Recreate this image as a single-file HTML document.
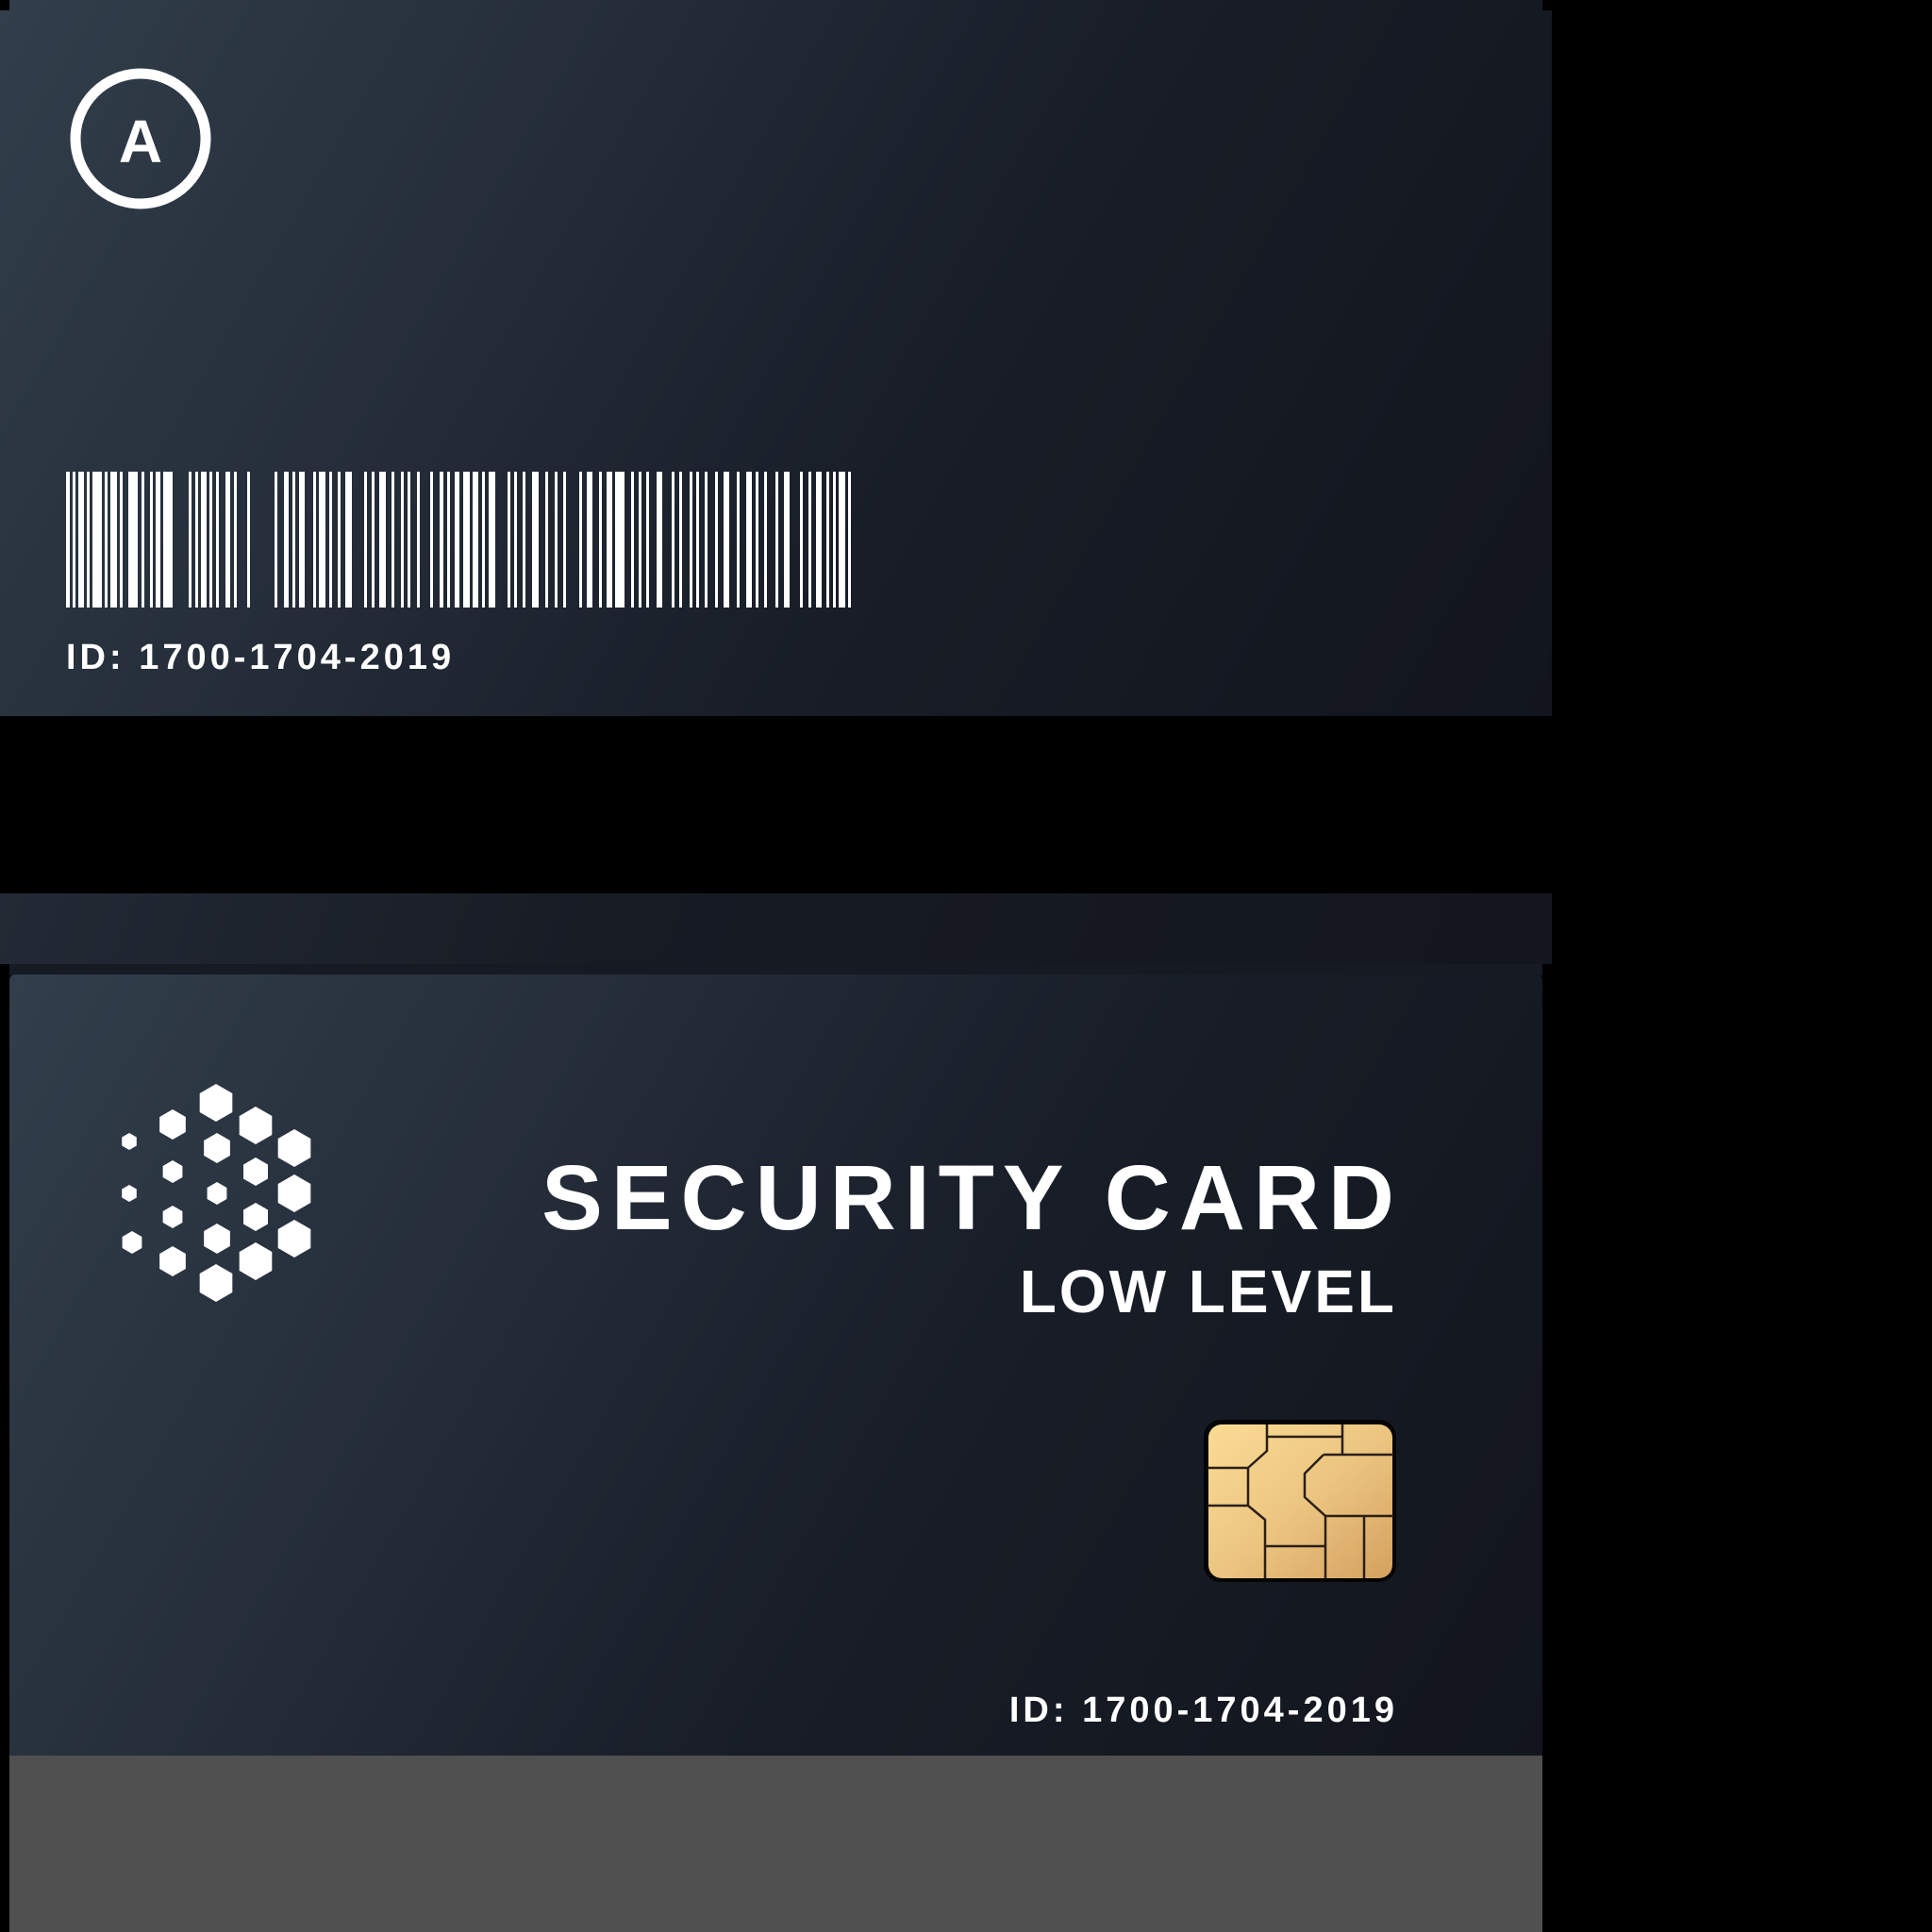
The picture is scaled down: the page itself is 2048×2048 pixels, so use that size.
<!DOCTYPE html>
<html><head><meta charset="utf-8"><style>
html,body{margin:0;padding:0;background:#000;width:2048px;height:2048px;overflow:hidden;position:relative;font-family:"Liberation Sans",Arial,sans-serif}
.abs{position:absolute}
.card{background:linear-gradient(120deg,#323e4b 0%,#252e3a 30%,#181d27 60%,#12151d 100%)}
.t{color:#fff;font-weight:bold;white-space:nowrap;position:absolute}
</style></head><body>
<div class="abs card" style="left:0;top:0;width:1645px;height:759px"></div>
<div class="abs" style="left:0;top:0;width:10px;height:11px;background:#000"></div>
<div class="abs" style="left:1635px;top:0;width:10px;height:11px;background:#000"></div>
<svg class="abs" style="left:0;top:0" width="300" height="300">
<circle cx="149" cy="147" r="69" fill="none" stroke="#fff" stroke-width="11"/>
<text x="149" y="172" text-anchor="middle" font-family="Liberation Sans,Arial,sans-serif" font-weight="bold" font-size="64" fill="#fff">A</text>
</svg>
<svg class="abs" style="left:70px;top:500px" width="832" height="144" fill="#fff">
<rect x="0" y="0" width="4" height="144"/><rect x="7" width="3" y="0" height="144"/><rect x="13" width="6" y="0" height="144"/><rect x="22" width="3" y="0" height="144"/><rect x="28" width="10" y="0" height="144"/><rect x="41" width="3" y="0" height="144"/><rect x="47" width="7" y="0" height="144"/><rect x="57" width="3" y="0" height="144"/><rect x="66" width="10" y="0" height="144"/><rect x="80" width="3" y="0" height="144"/><rect x="89" width="3" y="0" height="144"/><rect x="95" width="5" y="0" height="144"/><rect x="103" width="10" y="0" height="144"/><rect x="130" width="3" y="0" height="144"/><rect x="137" width="3" y="0" height="144"/><rect x="143" width="6" y="0" height="144"/><rect x="152" width="3" y="0" height="144"/><rect x="159" width="3" y="0" height="144"/><rect x="169" width="5" y="0" height="144"/><rect x="178" width="3" y="0" height="144"/><rect x="192" width="3" y="0" height="144"/><rect x="221" width="3" y="0" height="144"/><rect x="231" width="5" y="0" height="144"/><rect x="240" width="3" y="0" height="144"/><rect x="247" width="6" y="0" height="144"/><rect x="262" width="3" y="0" height="144"/><rect x="268" width="7" y="0" height="144"/><rect x="279" width="3" y="0" height="144"/><rect x="288" width="3" y="0" height="144"/><rect x="296" width="7" y="0" height="144"/><rect x="316" width="3" y="0" height="144"/><rect x="324" width="3" y="0" height="144"/><rect x="332" width="7" y="0" height="144"/><rect x="345" width="3" y="0" height="144"/><rect x="355" width="3" y="0" height="144"/><rect x="362" width="3" y="0" height="144"/><rect x="372" width="3" y="0" height="144"/><rect x="386" width="3" y="0" height="144"/><rect x="396" width="4" y="0" height="144"/><rect x="404" width="3" y="0" height="144"/><rect x="412" width="5" y="0" height="144"/><rect x="421" width="7" y="0" height="144"/><rect x="431" width="6" y="0" height="144"/><rect x="441" width="3" y="0" height="144"/><rect x="448" width="7" y="0" height="144"/><rect x="468" width="3" y="0" height="144"/><rect x="475" width="3" y="0" height="144"/><rect x="484" width="3" y="0" height="144"/><rect x="494" width="7" y="0" height="144"/><rect x="508" width="3" y="0" height="144"/><rect x="518" width="3" y="0" height="144"/><rect x="527" width="3" y="0" height="144"/><rect x="544" width="3" y="0" height="144"/><rect x="552" width="6" y="0" height="144"/><rect x="565" width="3" y="0" height="144"/><rect x="573" width="6" y="0" height="144"/><rect x="582" width="10" y="0" height="144"/><rect x="599" width="3" y="0" height="144"/><rect x="607" width="3" y="0" height="144"/><rect x="615" width="3" y="0" height="144"/><rect x="626" width="6" y="0" height="144"/><rect x="642" width="3" y="0" height="144"/><rect x="650" width="3" y="0" height="144"/><rect x="661" width="3" y="0" height="144"/><rect x="668" width="3" y="0" height="144"/><rect x="677" width="3" y="0" height="144"/><rect x="688" width="3" y="0" height="144"/><rect x="697" width="6" y="0" height="144"/><rect x="711" width="3" y="0" height="144"/><rect x="721" width="6" y="0" height="144"/><rect x="731" width="3" y="0" height="144"/><rect x="740" width="3" y="0" height="144"/><rect x="752" width="3" y="0" height="144"/><rect x="761" width="6" y="0" height="144"/><rect x="778" width="3" y="0" height="144"/><rect x="787" width="3" y="0" height="144"/><rect x="795" width="6" y="0" height="144"/><rect x="806" width="3" y="0" height="144"/><rect x="813" width="3" y="0" height="144"/><rect x="819" width="7" y="0" height="144"/><rect x="829" width="3" y="0" height="144"/>
</svg>
<div class="t" style="left:70px;top:675px;font-size:38px;line-height:44px;letter-spacing:4px">ID: 1700-1704-2019</div>

<div class="abs" style="left:0;top:947px;width:1645px;height:75px;background:linear-gradient(110deg,#232a35 0%,#171b24 40%,#13161e 100%)"></div>
<div class="abs" style="left:10px;top:1022px;width:1625px;height:12px;background:#161a22"></div>

<div class="abs card" style="left:10px;top:1033px;width:1625px;height:828px;border-radius:6px 6px 0 0"></div>
<div class="abs" style="left:10px;top:1861px;width:1625px;height:187px;background:#505050"></div>

<svg class="abs" style="left:0;top:1100px" width="400" height="320" fill="#fff">
<g transform="translate(0,-1100)">
<polygon points="0,-1 0.866,-0.5 0.866,0.5 0,1 -0.866,0.5 -0.866,-0.5" transform="translate(229,1169) scale(20)"/>
<polygon points="0,-1 0.866,-0.5 0.866,0.5 0,1 -0.866,0.5 -0.866,-0.5" transform="translate(183,1192) scale(16)"/>
<polygon points="0,-1 0.866,-0.5 0.866,0.5 0,1 -0.866,0.5 -0.866,-0.5" transform="translate(271,1193) scale(20)"/>
<polygon points="0,-1 0.866,-0.5 0.866,0.5 0,1 -0.866,0.5 -0.866,-0.5" transform="translate(312,1217) scale(20)"/>
<polygon points="0,-1 0.866,-0.5 0.866,0.5 0,1 -0.866,0.5 -0.866,-0.5" transform="translate(137,1210) scale(9)"/>
<polygon points="0,-1 0.866,-0.5 0.866,0.5 0,1 -0.866,0.5 -0.866,-0.5" transform="translate(230,1217) scale(16)"/>
<polygon points="0,-1 0.866,-0.5 0.866,0.5 0,1 -0.866,0.5 -0.866,-0.5" transform="translate(183,1242) scale(12)"/>
<polygon points="0,-1 0.866,-0.5 0.866,0.5 0,1 -0.866,0.5 -0.866,-0.5" transform="translate(271,1242) scale(15)"/>
<polygon points="0,-1 0.866,-0.5 0.866,0.5 0,1 -0.866,0.5 -0.866,-0.5" transform="translate(137,1265) scale(9)"/>
<polygon points="0,-1 0.866,-0.5 0.866,0.5 0,1 -0.866,0.5 -0.866,-0.5" transform="translate(230,1265) scale(12)"/>
<polygon points="0,-1 0.866,-0.5 0.866,0.5 0,1 -0.866,0.5 -0.866,-0.5" transform="translate(312,1265) scale(20)"/>
<polygon points="0,-1 0.866,-0.5 0.866,0.5 0,1 -0.866,0.5 -0.866,-0.5" transform="translate(183,1290) scale(12)"/>
<polygon points="0,-1 0.866,-0.5 0.866,0.5 0,1 -0.866,0.5 -0.866,-0.5" transform="translate(271,1290) scale(15)"/>
<polygon points="0,-1 0.866,-0.5 0.866,0.5 0,1 -0.866,0.5 -0.866,-0.5" transform="translate(140,1317) scale(12)"/>
<polygon points="0,-1 0.866,-0.5 0.866,0.5 0,1 -0.866,0.5 -0.866,-0.5" transform="translate(230,1313) scale(16)"/>
<polygon points="0,-1 0.866,-0.5 0.866,0.5 0,1 -0.866,0.5 -0.866,-0.5" transform="translate(312,1313) scale(20)"/>
<polygon points="0,-1 0.866,-0.5 0.866,0.5 0,1 -0.866,0.5 -0.866,-0.5" transform="translate(183,1337) scale(16)"/>
<polygon points="0,-1 0.866,-0.5 0.866,0.5 0,1 -0.866,0.5 -0.866,-0.5" transform="translate(271,1337) scale(20)"/>
<polygon points="0,-1 0.866,-0.5 0.866,0.5 0,1 -0.866,0.5 -0.866,-0.5" transform="translate(229,1360) scale(20)"/>
</g></svg>

<div class="t" style="right:570px;top:1215px;font-size:97px;line-height:110px;letter-spacing:9px;margin-right:-9px">SECURITY CARD</div>
<div class="t" style="right:570px;top:1332px;font-size:64px;line-height:74px;letter-spacing:3px;margin-right:-3px">LOW LEVEL</div>

<svg class="abs" style="left:1270px;top:1500px" width="220" height="185">
<defs><linearGradient id="g" x1="0" y1="0" x2="1" y2="1"><stop offset="0" stop-color="#fbdc94"/><stop offset="0.5" stop-color="#ecc681"/><stop offset="1" stop-color="#d4a15f"/></linearGradient></defs>
<rect x="6" y="5" width="204" height="172" rx="18" fill="#050505"/>
<rect x="11" y="10" width="195" height="163" rx="14" fill="url(#g)"/>
<g fill="none" stroke="#2a1f14" stroke-width="2.5">
<path d="M73 10V38L53 56V96L71 111V173M10 56H53M10 96H53M73 23H153M153 10V42M133 42H207M133 42L113 62V87L135 107V173M135 107H207M176 107V173M71 139H135"/>
</g>
</svg>

<div class="t" style="right:570px;top:1791px;font-size:38px;line-height:44px;letter-spacing:4px;margin-right:-4px">ID: 1700-1704-2019</div>
</body></html>
